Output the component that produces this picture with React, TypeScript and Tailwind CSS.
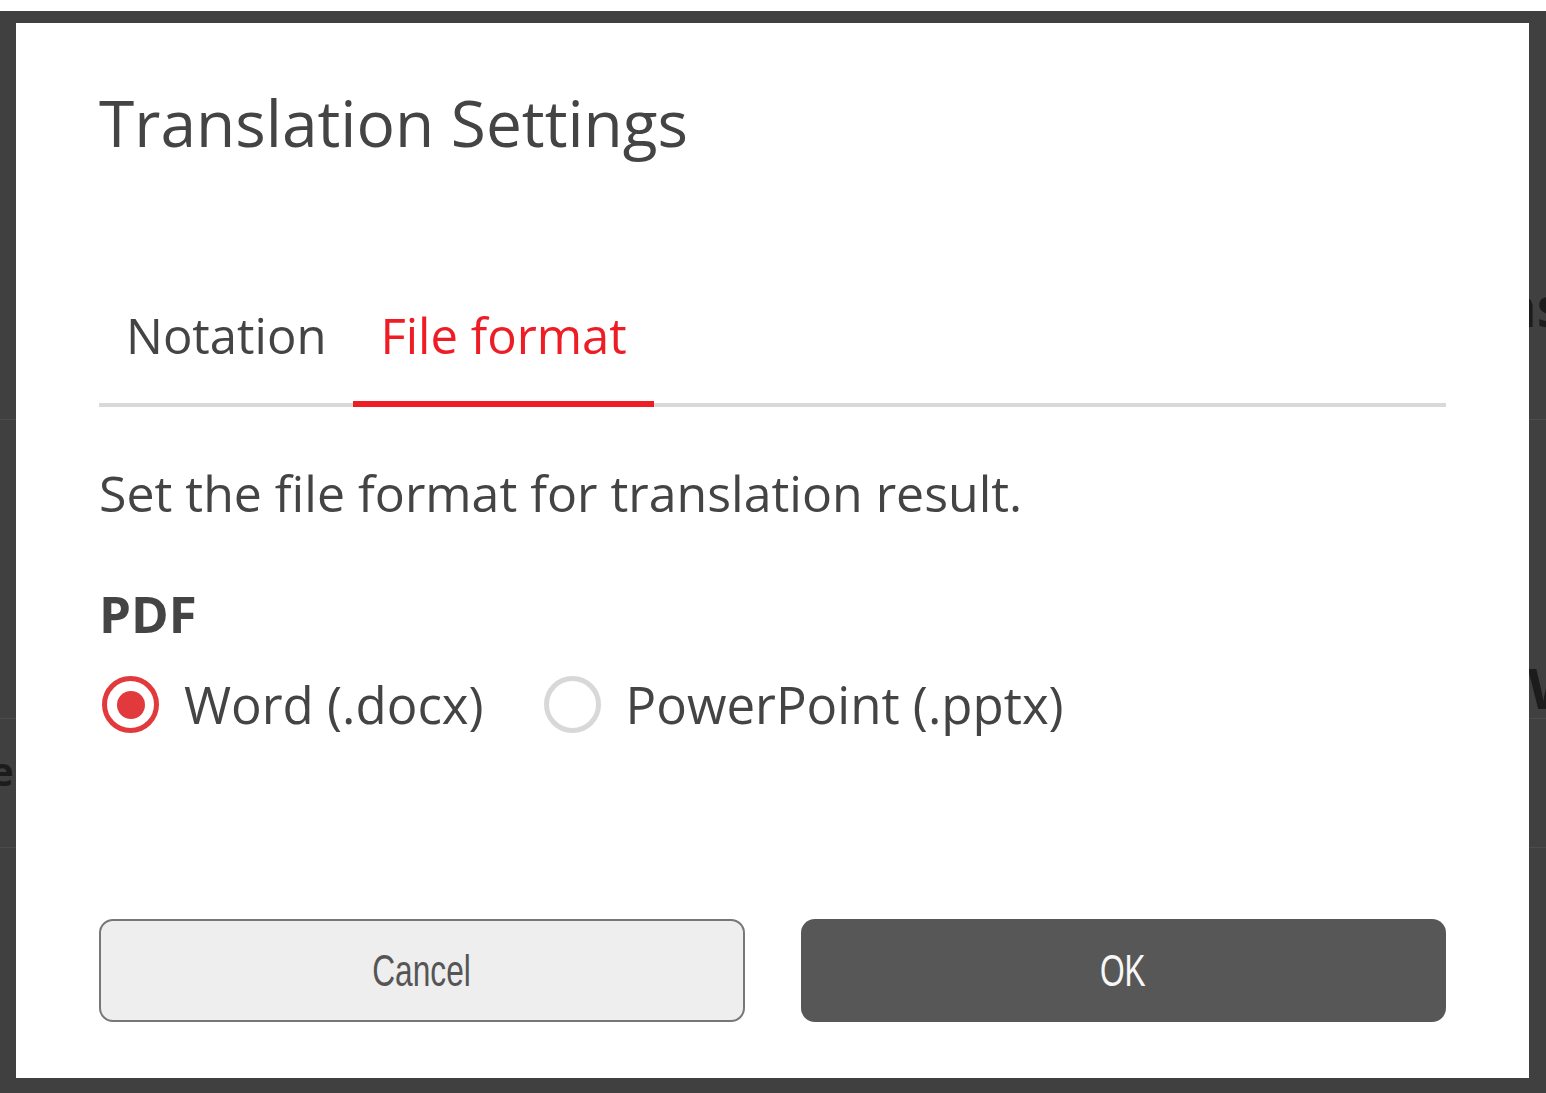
import { useState } from 'react';

const FONT = { fontFamily: '"Open Sans", "DejaVu Sans", sans-serif' };

function Radio({ checked, label, onClick }: { checked: boolean; label: string; onClick: () => void }) {
  return (
    <button type="button" onClick={onClick} className="flex items-center gap-[25px]">
      <span
        className={
          checked
            ? 'flex h-[57px] w-[57px] items-center justify-center rounded-full border-[5px] border-[#e23a3c]'
            : 'flex h-[57px] w-[57px] items-center justify-center rounded-full border-[5px] border-[#d8d8d8]'
        }
      >
        {checked && <span className="h-[28px] w-[28px] rounded-full bg-[#e23a3c]" />}
      </span>
      <span className="text-[51px] leading-none text-[#444]">{label}</span>
    </button>
  );
}

export default function App() {
  const [tab, setTab] = useState<'notation' | 'format'>('format');
  const [format, setFormat] = useState<'docx' | 'pptx'>('docx');

  return (
    <div className="h-[1093px] w-[1546px] overflow-hidden bg-white pt-[11px]" style={FONT}>
      <div className="relative h-[1082px] bg-[#404040]">
        {/* page behind the dialog */}
        <div className="flex h-full flex-col">
          <div className="h-[409px] border-b border-[#4c4c4c] pl-[1500px] pt-[252px]">
            <span className="whitespace-nowrap text-[56px] font-bold text-[#1c1c1c]">ns</span>
          </div>
          <div className="h-[299px] border-b border-[#4c4c4c] pl-[1528px] pt-[225px]">
            <span className="whitespace-nowrap text-[56px] font-bold text-[#1c1c1c]">W</span>
          </div>
          <div className="h-[129px] border-b border-[#4c4c4c] pt-[22px]">
            <span className="-ml-[10px] whitespace-nowrap text-[40px] font-bold text-[#1c1c1c]">ei</span>
          </div>
        </div>

        {/* dialog */}
        <div className="absolute left-[16px] top-[12px] flex h-[1055px] w-[1513px] flex-col bg-white px-[83px]">
          <h1 className="mt-[60px] text-[64px] leading-[80px] text-[#444]">Translation Settings</h1>

          <div className="mt-[142px] flex border-b-[4px] border-[#d9d9d9]">
            <button
              type="button"
              onClick={() => setTab('notation')}
              className={
                tab === 'notation'
                  ? '-mb-[4px] border-b-[6px] border-[#ee1c25] px-[27px] pb-[36px] text-[49px] leading-[60px] text-[#ee1c25]'
                  : '-mb-[4px] border-b-[6px] border-transparent px-[27px] pb-[36px] text-[49px] leading-[60px] text-[#444]'
              }
            >
              Notation
            </button>
            <button
              type="button"
              onClick={() => setTab('format')}
              className={
                tab === 'format'
                  ? '-mb-[4px] border-b-[6px] border-[#ee1c25] px-[27px] pb-[36px] text-[49px] leading-[60px] text-[#ee1c25]'
                  : '-mb-[4px] border-b-[6px] border-transparent px-[27px] pb-[36px] text-[49px] leading-[60px] text-[#444]'
              }
            >
              File format
            </button>
          </div>

          <p className="mt-[56px] text-[50px] leading-[60px] text-[#444]">Set the file format for translation result.</p>

          <h2 className="mt-[60px] text-[51px] font-bold leading-[60px] text-[#444]">PDF</h2>

          <div className="mt-[33px] flex items-center gap-[60px] pl-[3px]">
            <Radio checked={format === 'docx'} label="Word (.docx)" onClick={() => setFormat('docx')} />
            <Radio checked={format === 'pptx'} label="PowerPoint (.pptx)" onClick={() => setFormat('pptx')} />
          </div>

          <div className="mt-auto mb-[56px] grid grid-cols-2 gap-[56px]">
            <button
              type="button"
              className="flex h-[103px] items-center justify-center rounded-[14px] border-2 border-[#777] bg-[#eeeeee] text-[#555]"
            >
              <span className="inline-block scale-x-[0.72] text-[44px]" style={{ fontFamily: '"Liberation Sans", sans-serif' }}>
                Cancel
              </span>
            </button>
            <button
              type="button"
              className="flex h-[103px] items-center justify-center rounded-[14px] bg-[#575757] text-[#f7f7f7]"
            >
              <span className="inline-block scale-x-[0.72] text-[44px]" style={{ fontFamily: '"Liberation Sans", sans-serif' }}>
                OK
              </span>
            </button>
          </div>
        </div>
      </div>
    </div>
  );
}
